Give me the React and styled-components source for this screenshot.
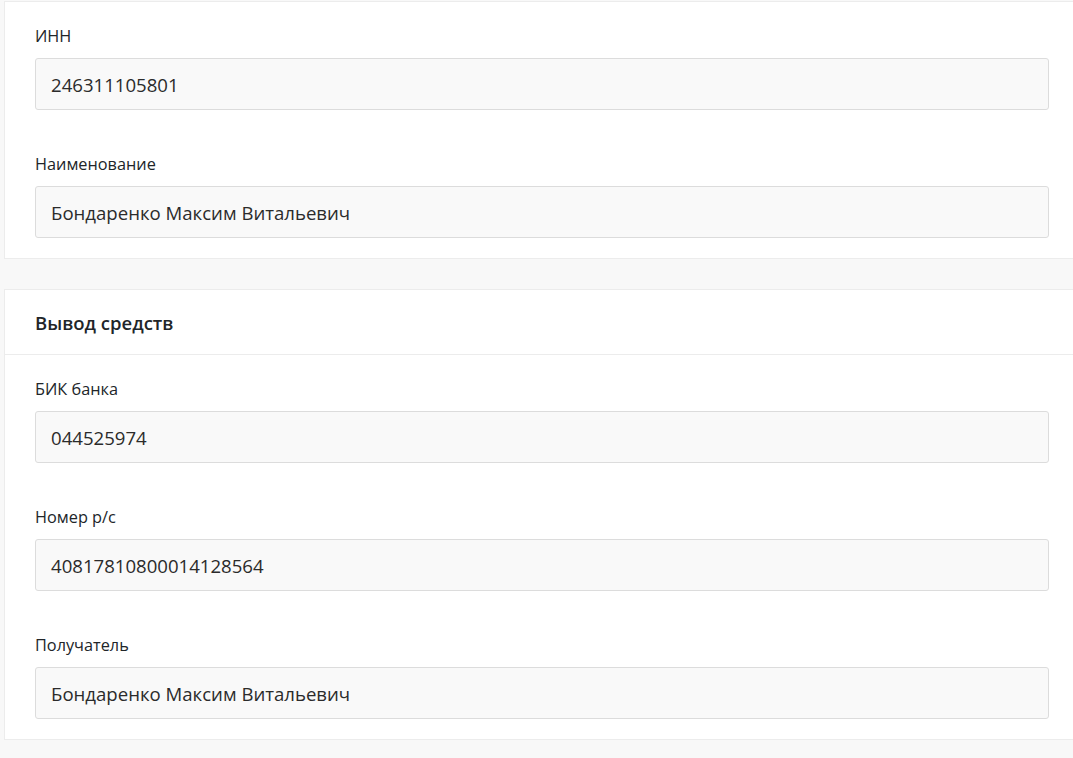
import React from "react";
import styled, { createGlobalStyle } from "styled-components";

const Global = createGlobalStyle`
  html, body { margin: 0; padding: 0; background: #f8f8f8; overflow: hidden; }
  body { font-family: "Open Sans", "Noto Sans", sans-serif; color: #212529; }
  * { box-sizing: border-box; }
`;

const Page = styled.div`
  width: 1076px;
  padding: 1px 0 0 4px;
  display: flex;
  flex-direction: column;
  gap: 30px;
`;

const Card = styled.section`
  background: #fff;
  border: 1px solid #ececec;
  width: 1076px;
`;

const CardHeader = styled.div`
  height: 65px;
  padding: 0 30px;
  display: flex;
  align-items: center;
  border-bottom: 1px solid #ececec;
  font-size: 18.5px;
  font-weight: 600;
  color: #212529;
`;

const CardBody = styled.div`
  padding: 20px 30px 20px 30px;
  display: flex;
  flex-direction: column;
  gap: 40px;
`;

const Field = styled.div`
  display: flex;
  flex-direction: column;
  gap: 10px;
`;

const Label = styled.label`
  padding-top: 2px;
  font-size: 16.3px;
  line-height: 24px;
  color: #212529;
`;

const Input = styled.div`
  height: 52px;
  display: flex;
  align-items: center;
  padding: 0 15px;
  background: #f9f9f9;
  border: 1px solid #dcdcdc;
  border-radius: 3px;
  font-size: 18.6px;
  color: #2b2b2b;
`;

const Row = ({ label, value }) => (
  <Field>
    <Label>{label}</Label>
    <Input>{value}</Input>
  </Field>
);

export default function App() {
  return (
    <>
      <Global />
      <Page>
        <Card>
          <CardBody>
            <Row label="ИНН" value="246311105801" />
            <Row label="Наименование" value="Бондаренко Максим Витальевич" />
          </CardBody>
        </Card>
        <Card>
          <CardHeader>Вывод средств</CardHeader>
          <CardBody>
            <Row label="БИК банка" value="044525974" />
            <Row label="Номер р/с" value="40817810800014128564" />
            <Row label="Получатель" value="Бондаренко Максим Витальевич" />
          </CardBody>
        </Card>
      </Page>
    </>
  );
}
